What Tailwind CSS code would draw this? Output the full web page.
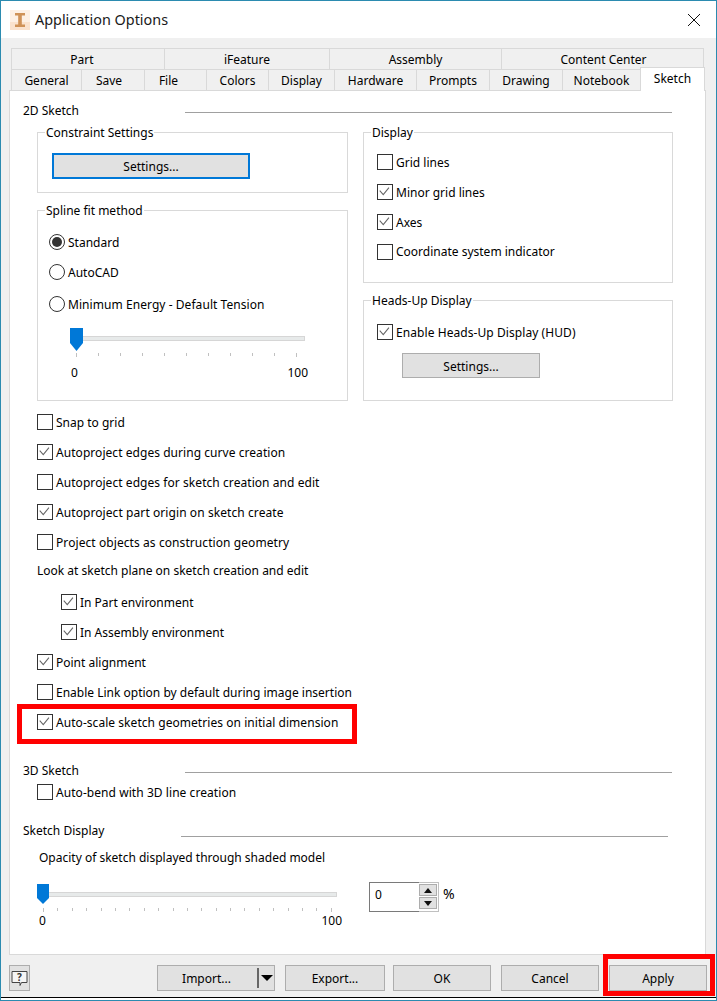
<!DOCTYPE html>
<html>
<head>
<meta charset="utf-8">
<script src="https://cdn.jsdelivr.net/npm/@tailwindcss/browser@4"></script>
</head>
<body class="m-0">
<div class="relative w-[717px] h-[1001px] overflow-hidden bg-[#f0f0f0] border border-[#2b8bb0] text-[12px] leading-[16px] text-black font-['Noto_Sans',sans-serif]">
  <!-- title bar -->
  <div class="flex items-center h-[37px] bg-white pl-[9px] pr-[15px]">
    <svg width="20" height="20" viewBox="0 0 20 20" class="shrink-0"><rect width="20" height="20" fill="#fdf0e4"/><rect y="12" width="20" height="8" fill="#fae2cd"/><path d="M5 3h10v2.5h-3.2v9H15V17H5v-2.5h3.2v-9H5z" fill="#cf9257"/></svg>
    <span class="ml-[5px] text-[14.4px] leading-[20px] text-[#1a1a1a]">Application Options</span>
    <svg width="14" height="14" viewBox="0 0 14 14" class="ml-auto"><path d="M1 1l12 12M13 1L1 13" stroke="#111" stroke-width="1" fill="none"/></svg>
  </div>
  <!-- tabs -->
  <div class="relative pt-[10px] pl-[10px]">
    <div class="flex h-[21px] border-t border-[#d9d9d9] text-center w-[693px]">
      <div class="w-[153px] border-l border-[#d9d9d9] leading-[21px] pr-[12px]">Part</div>
      <div class="w-[165px] border-l border-[#d9d9d9] leading-[21px]">iFeature</div>
      <div class="w-[172px] border-l border-[#d9d9d9] leading-[21px]">Assembly</div>
      <div class="w-[203px] border-x border-[#d9d9d9] leading-[21px] pl-[2px]">Content Center</div>
    </div>
    <div class="flex h-[21px] border-t border-[#d9d9d9] text-center w-[629px]">
      <div class="w-[70px] border-l border-[#d9d9d9] leading-[21px]">General</div>
      <div class="w-[63px] border-l border-[#d9d9d9] leading-[21px] pr-[8px]">Save</div>
      <div class="w-[62px] border-l border-[#d9d9d9] leading-[21px] pr-[14px]">File</div>
      <div class="w-[62px] border-l border-[#d9d9d9] leading-[21px]">Colors</div>
      <div class="w-[66px] border-l border-[#d9d9d9] leading-[21px]">Display</div>
      <div class="w-[82px] border-l border-[#d9d9d9] leading-[21px]">Hardware</div>
      <div class="w-[73px] border-l border-[#d9d9d9] leading-[21px]">Prompts</div>
      <div class="w-[73px] border-l border-[#d9d9d9] leading-[21px]">Drawing</div>
      <div class="w-[78px] border-l border-[#d9d9d9] leading-[21px]">Notebook</div>
    </div>
    <div class="absolute left-[639px] top-[29px] z-10 w-[65px] h-[24px] bg-white border border-b-0 border-[#d9d9d9] text-center leading-[22px]">Sketch</div>
  </div>
  <!-- panel -->
  <div class="ml-[8px] w-[697px] h-[865px] bg-white border border-[#d9d9d9]">
    <div class="flex h-[41px] pt-[12px] pl-[13px]">
      <span class="w-[162px]">2D Sketch</span>
      <div class="mt-[9px] h-px w-[487px] bg-[#a0a0a0]"></div>
    </div>
    <div class="flex gap-[15px] pl-[27px]">
      <div class="w-[311px]">
        <div class="relative h-[61px] border border-[#d9d9d9] pt-[20px] pl-[14px]">
          <span class="absolute left-[7px] -top-[8px] bg-white px-[1px]">Constraint Settings</span>
          <div class="flex items-center justify-center w-[198px] h-[26px] pt-[2px] bg-[#e1e1e1] border-2 border-[#0078d7]">Settings...</div>
        </div>
        <div class="relative h-[191px] mt-[17px] border border-[#d9d9d9] pt-[16px] pl-[11px]">
          <span class="absolute left-[7px] -top-[8px] bg-white px-[1px]">Spline fit method</span>
          <div class="flex items-center gap-[3px] h-[30px]">
            <span class="flex items-center justify-center w-[16px] h-[16px] rounded-full border border-[#333]"><span class="w-[10px] h-[10px] rounded-full bg-[#333]"></span></span><span class="mt-[2px]">Standard</span>
          </div>
          <div class="flex items-center gap-[3px] h-[30px]">
            <span class="w-[16px] h-[16px] rounded-full border border-[#333]"></span><span class="mt-[2px]">AutoCAD</span>
          </div>
          <div class="flex items-center gap-[3px] h-[30px] mt-[2px]">
            <span class="w-[16px] h-[16px] rounded-full border border-[#333]"></span><span class="mt-[2px] tracking-[0.06px]">Minimum Energy - Default Tension</span>
          </div>
          <div class="relative w-[240px] h-[56px] mt-[9px] ml-[21px]">
            <div class="absolute left-0 top-[8px] w-[235px] h-[5px] bg-[#e7eaea] border border-[#d6d6d6]"></div>
            <svg class="absolute left-0 top-0" width="13" height="23" viewBox="0 0 13 23"><path d="M0 0H13V15L6.5 23L0 15Z" fill="#0078d7"/></svg>
            <div class="absolute left-[6px] top-[25px] flex justify-between w-[221px]">
              <i class="w-px h-[4px] bg-[#c0c0c0]"></i><i class="w-px h-[3px] bg-[#c0c0c0]"></i><i class="w-px h-[3px] bg-[#c0c0c0]"></i><i class="w-px h-[3px] bg-[#c0c0c0]"></i><i class="w-px h-[3px] bg-[#c0c0c0]"></i><i class="w-px h-[3px] bg-[#c0c0c0]"></i><i class="w-px h-[3px] bg-[#c0c0c0]"></i><i class="w-px h-[3px] bg-[#c0c0c0]"></i><i class="w-px h-[3px] bg-[#c0c0c0]"></i><i class="w-px h-[3px] bg-[#c0c0c0]"></i><i class="w-px h-[4px] bg-[#c0c0c0]"></i>
            </div>
            <div class="absolute left-[1px] top-[37px] flex justify-between w-[237px]"><span>0</span><span>100</span></div>
          </div>
        </div>
      </div>
      <div class="w-[310px]">
        <div class="relative h-[151px] border border-[#d9d9d9] pt-[14px] pl-[13px]">
          <span class="absolute left-[7px] -top-[8px] bg-white px-[1px]">Display</span>
          <div class="flex items-center gap-[3px] h-[30px]"><span class="w-[16px] h-[16px] border border-[#333]"></span><span class="mt-[2px]">Grid lines</span></div>
          <div class="flex items-center gap-[3px] h-[30px]"><svg width="16" height="16" viewBox="0 0 16 16" class="border border-[#333]"><path d="M2 6.5L6 11L12.5 3" stroke="#666" stroke-width="1.2" fill="none"/></svg><span class="mt-[2px]">Minor grid lines</span></div>
          <div class="flex items-center gap-[3px] h-[30px]"><svg width="16" height="16" viewBox="0 0 16 16" class="border border-[#333]"><path d="M2 6.5L6 11L12.5 3" stroke="#666" stroke-width="1.2" fill="none"/></svg><span class="mt-[2px]">Axes</span></div>
          <div class="flex items-center gap-[3px] h-[30px]"><span class="w-[16px] h-[16px] border border-[#333]"></span><span>Coordinate system indicator</span></div>
        </div>
        <div class="relative h-[101px] mt-[17px] border border-[#d9d9d9] pt-[16px] pl-[13px]">
          <span class="absolute left-[7px] -top-[8px] bg-white px-[1px]">Heads-Up Display</span>
          <div class="flex items-center gap-[3px] h-[30px]"><svg width="16" height="16" viewBox="0 0 16 16" class="border border-[#333]"><path d="M2 6.5L6 11L12.5 3" stroke="#666" stroke-width="1.2" fill="none"/></svg><span class="mt-[2px] tracking-[0.07px]">Enable Heads-Up Display (HUD)</span></div>
          <div class="flex items-center justify-center ml-[25px] mt-[6px] w-[138px] h-[25px] pt-[2px] bg-[#e1e1e1] border border-[#adadad]">Settings...</div>
        </div>
      </div>
    </div>
    <!-- options list -->
    <div class="mt-[6px] pl-[27px]">
      <div class="flex items-center gap-[3px] h-[30px]"><span class="w-[16px] h-[16px] border border-[#333]"></span><span class="mt-[2px]">Snap to grid</span></div>
      <div class="flex items-center gap-[3px] h-[30px]"><svg width="16" height="16" viewBox="0 0 16 16" class="border border-[#333]"><path d="M2 6.5L6 11L12.5 3" stroke="#666" stroke-width="1.2" fill="none"/></svg><span class="mt-[2px] tracking-[0.05px]">Autoproject edges during curve creation</span></div>
      <div class="flex items-center gap-[3px] h-[30px]"><span class="w-[16px] h-[16px] border border-[#333]"></span><span class="mt-[2px] tracking-[0.06px]">Autoproject edges for sketch creation and edit</span></div>
      <div class="flex items-center gap-[3px] h-[30px]"><svg width="16" height="16" viewBox="0 0 16 16" class="border border-[#333]"><path d="M2 6.5L6 11L12.5 3" stroke="#666" stroke-width="1.2" fill="none"/></svg><span class="mt-[2px] tracking-[0.08px]">Autoproject part origin on sketch create</span></div>
      <div class="flex items-center gap-[3px] h-[30px]"><span class="w-[16px] h-[16px] border border-[#333]"></span><span class="mt-[2px] tracking-[0.08px]">Project objects as construction geometry</span></div>
      <div class="flex items-center h-[26px]"><span class="mt-[2px]">Look at sketch plane on sketch creation and edit</span></div>
      <div class="flex items-center gap-[3px] h-[30px] mt-[4px] pl-[24px]"><svg width="16" height="16" viewBox="0 0 16 16" class="border border-[#333]"><path d="M2 6.5L6 11L12.5 3" stroke="#666" stroke-width="1.2" fill="none"/></svg><span class="mt-[2px]">In Part environment</span></div>
      <div class="flex items-center gap-[3px] h-[30px] pl-[24px]"><svg width="16" height="16" viewBox="0 0 16 16" class="border border-[#333]"><path d="M2 6.5L6 11L12.5 3" stroke="#666" stroke-width="1.2" fill="none"/></svg><span class="mt-[2px]">In Assembly environment</span></div>
      <div class="flex items-center gap-[3px] h-[30px]"><svg width="16" height="16" viewBox="0 0 16 16" class="border border-[#333]"><path d="M2 6.5L6 11L12.5 3" stroke="#666" stroke-width="1.2" fill="none"/></svg><span class="mt-[2px]">Point alignment</span></div>
      <div class="flex items-center gap-[3px] h-[30px]"><span class="w-[16px] h-[16px] border border-[#333]"></span><span class="mt-[2px]">Enable Link option by default during image insertion</span></div>
      <div class="flex items-center gap-[3px] h-[30px]"><svg width="16" height="16" viewBox="0 0 16 16" class="border border-[#333]"><path d="M2 6.5L6 11L12.5 3" stroke="#666" stroke-width="1.2" fill="none"/></svg><span class="mt-[2px] tracking-[0.05px]">Auto-scale sketch geometries on initial dimension</span></div>
    </div>
    <div class="flex h-[40px] pt-[26px] pl-[13px]">
      <span class="w-[162px]">3D Sketch</span>
      <div class="mt-[9px] h-px w-[487px] bg-[#a0a0a0]"></div>
    </div>
    <div class="flex items-center gap-[3px] h-[30px] pl-[27px]"><span class="w-[16px] h-[16px] border border-[#333]"></span><span class="mt-[2px] tracking-[0.06px]">Auto-bend with 3D line creation</span></div>
    <div class="flex h-[42px] pt-[16px] pl-[13px]">
      <span class="w-[158px]">Sketch Display</span>
      <div class="mt-[13px] h-px w-[487px] bg-[#a0a0a0]"></div>
    </div>
    <div class="pl-[29px] pt-[1px]">Opacity of sketch displayed through shaded model</div>
    <div class="flex items-start pl-[27px] mt-[16px]">
      <div class="relative w-[332px] h-[50px] mt-[2px]">
        <div class="absolute left-0 top-[8px] w-[300px] h-[5px] bg-[#e7eaea] border border-[#d6d6d6]"></div>
        <svg class="absolute left-0 top-0" width="12" height="20" viewBox="0 0 12 20"><path d="M0 0H12V14L6 20L0 14Z" fill="#0078d7"/></svg>
        <div class="absolute left-[6px] top-[24px] flex justify-between w-[289px]">
          <i class="w-px h-[4px] bg-[#c0c0c0]"></i><i class="w-px h-[3px] bg-[#c0c0c0]"></i><i class="w-px h-[3px] bg-[#c0c0c0]"></i><i class="w-px h-[3px] bg-[#c0c0c0]"></i><i class="w-px h-[3px] bg-[#c0c0c0]"></i><i class="w-px h-[3px] bg-[#c0c0c0]"></i><i class="w-px h-[3px] bg-[#c0c0c0]"></i><i class="w-px h-[3px] bg-[#c0c0c0]"></i><i class="w-px h-[3px] bg-[#c0c0c0]"></i><i class="w-px h-[3px] bg-[#c0c0c0]"></i><i class="w-px h-[3px] bg-[#c0c0c0]"></i><i class="w-px h-[3px] bg-[#c0c0c0]"></i><i class="w-px h-[3px] bg-[#c0c0c0]"></i><i class="w-px h-[3px] bg-[#c0c0c0]"></i><i class="w-px h-[3px] bg-[#c0c0c0]"></i><i class="w-px h-[3px] bg-[#c0c0c0]"></i><i class="w-px h-[3px] bg-[#c0c0c0]"></i><i class="w-px h-[3px] bg-[#c0c0c0]"></i><i class="w-px h-[3px] bg-[#c0c0c0]"></i><i class="w-px h-[3px] bg-[#c0c0c0]"></i><i class="w-px h-[4px] bg-[#c0c0c0]"></i>
        </div>
        <div class="absolute left-[2px] top-[29px] flex justify-between w-[303px]"><span>0</span><span>100</span></div>
      </div>
      <div class="flex w-[70px] h-[30px]">
        <div class="w-[50px] h-[30px] border border-[#7a7a7a] border-r-0 pl-[5px] pt-[4px]">0</div>
        <div class="flex flex-col gap-[1px] w-[20px] h-[30px] border border-l-0 border-[#c0c0c0] pt-[1px] pr-[1px]">
          <div class="flex items-center justify-center h-[12px] bg-[#e1e1e1] border border-[#adadad]"><svg width="8" height="5" viewBox="0 0 8 5"><path d="M4 0L8 5H0Z" fill="#111"/></svg></div>
          <div class="flex items-center justify-center h-[12px] bg-[#e1e1e1] border border-[#adadad]"><svg width="8" height="5" viewBox="0 0 8 5"><path d="M0 0H8L4 5Z" fill="#111"/></svg></div>
        </div>
      </div>
      <span class="ml-[4px] mt-[4px] text-[14px]">%</span>
    </div>
  </div>
  <!-- bottom buttons -->
  <div class="flex items-start pt-[10px] pl-[8px]">
    <div class="flex items-center justify-center w-[21px] h-[26px] bg-[#e1e1e1] border border-[#adadad]">
      <svg width="17" height="17" viewBox="0 0 17 17"><path d="M1 1.5H16V12.5H10.5L9 15.5V12.5H1Z" fill="#f5f5f5" stroke="#444"/><text x="8.5" y="10.5" text-anchor="middle" font-size="10" font-weight="700" font-family="Noto Sans" fill="#333">?</text></svg>
    </div>
    <div class="relative flex items-center w-[118px] h-[26px] ml-[127px] bg-[#e1e1e1] border border-[#adadad]">
      <span class="w-[97px] mr-[2px] mt-[2px] text-center">Import...</span>
      <i class="w-[2px] h-[20px] bg-[#666]"></i>
      <svg class="ml-[2px]" width="12" height="6" viewBox="0 0 12 6"><path d="M0 0H12L6 6Z" fill="#000"/></svg>
    </div>
    <div class="flex items-center justify-center w-[100px] h-[26px] pt-[2px] ml-[10px] bg-[#e1e1e1] border border-[#adadad]">Export...</div>
    <div class="flex items-center justify-center w-[98px] h-[26px] pt-[2px] ml-[8px] bg-[#e1e1e1] border border-[#adadad]">OK</div>
    <div class="flex items-center justify-center w-[98px] h-[26px] pt-[2px] ml-[10px] bg-[#e1e1e1] border border-[#adadad]">Cancel</div>
    <div class="flex items-center justify-center w-[98px] h-[26px] pt-[2px] ml-[10px] bg-[#e1e1e1] border border-[#adadad]">Apply</div>
  </div>
  <!-- bottom edge -->
  <div class="absolute left-0 right-0 top-[996px] h-px bg-black"></div>
  <div class="absolute left-0 right-0 top-[997px] h-[2px] bg-white"></div>
  <div class="absolute left-[704px] top-[990px] w-[3px] h-[3px] bg-[#c4c4c4]"></div>
  <!-- annotations -->
  <div class="absolute left-[16px] top-[703px] w-[340px] h-[40px] border-[5px] border-[#ff0000]"></div>
  <div class="absolute left-[602px] top-[953px] w-[112px] h-[42px] border-[5px] border-[#ff0000]"></div>
</div>
</body>
</html>
